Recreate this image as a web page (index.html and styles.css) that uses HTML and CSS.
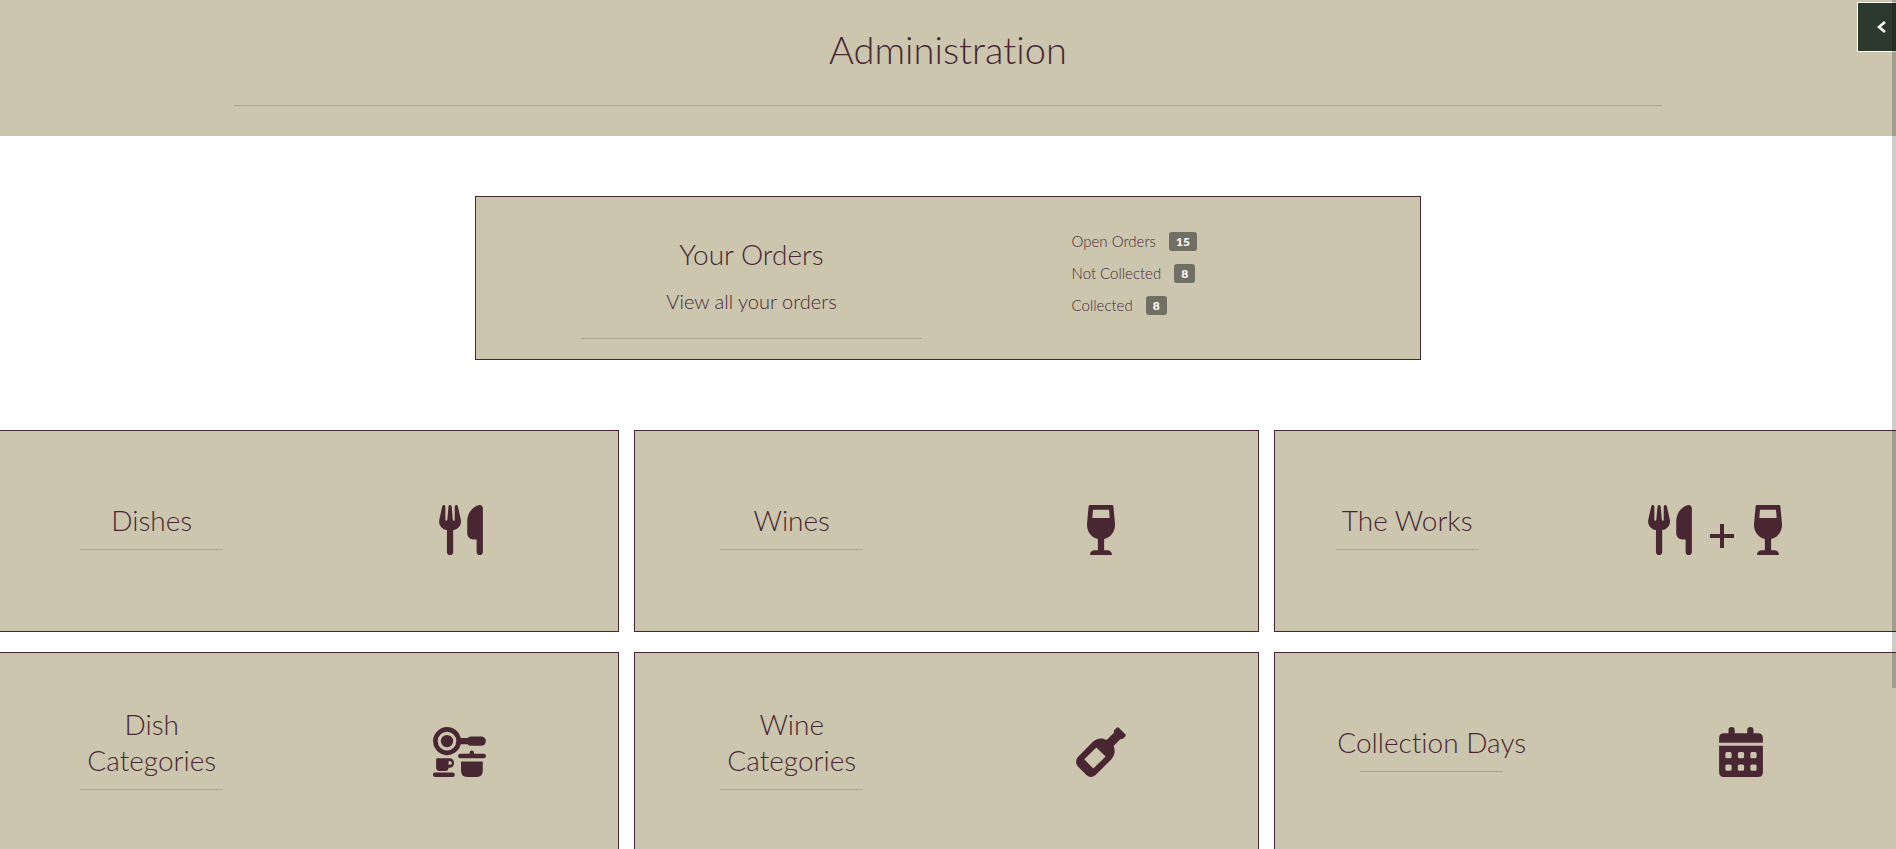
FILE: index.html
```html
<!DOCTYPE html>
<html lang="en">
<head>
<meta charset="utf-8">
<meta name="viewport" content="width=device-width, initial-scale=1">
<title>Administration</title>
<link rel="stylesheet" href="styles.css">
</head>
<body>
<svg class="sprite" aria-hidden="true">
  <symbol id="utensils" viewBox="0 0 448 512"><path d="M416 0C400 0 288 32 288 176V288c0 35.300 28.700 64 64 64h32V480c0 17.700 14.300 32 32 32s32-14.300 32-32V32c0-17.700-14.300-32-32-32zM64 16C64 7.800 57.900 1 49.700 .1S34.200 4.600 32.400 12.500L2.100 148.800C.7 155.100 0 161.500 0 167.900c0 45.900 35.100 83.600 80 87.700V480c0 17.700 14.300 32 32 32s32-14.300 32-32V255.600c44.900-4.100 80-41.800 80-87.700c0-6.400-.7-12.800-2.100-19.100L191.600 12.500c-1.800-8-9.300-13.300-17.400-12.400S160 7.800 160 16V150.200c0 5.400-4.400 9.800-9.800 9.800c-5.100 0-9.300-3.900-9.800-9L127.900 14.600C127.200 6.300 120.300 0 112 0s-15.200 6.300-15.900 14.600L83.700 151c-.5 5.100-4.700 9-9.800 9c-5.400 0-9.800-4.400-9.800-9.800V16z"/></symbol>
  <symbol id="glass" viewBox="0 0 320 512"><path fill-rule="evenodd" d="M48 0H272Q286 0 287 15L303 190C309 268 262 334 192 349V464H224C252 464 272 482 272 505Q272 512 265 512H55Q48 512 48 505C48 482 68 464 96 464H128V349C58 334 11 268 17 190L33 15Q34 0 48 0ZM78 48L71 134H249L242 48Z"/></symbol>
  <symbol id="plus" viewBox="0 0 24 50"><path d="M10 19h4v10h10v4H14v10h-4V33H0v-4h10z"/></symbol>
  <symbol id="kitchen" viewBox="16 0 576 512"><path fill-rule="evenodd" d="M160 0C229 0 287 48 301 112H372C381 102 396 96 410 96H512A48 48 0 0 1 512 192H410C396 192 381 186 372 176H301A144 144 0 1 1 160 0ZM160 48A96 96 0 1 0 160 240A96 96 0 1 0 160 48ZM160 80A64 64 0 1 1 160 208A64 64 0 1 1 160 80ZM392 275V264A22 22 0 0 1 438 264V275H538A22 22 0 0 1 538 320H296A22 22 0 0 1 296 275ZM304 354H528V448Q528 512 464 512H368Q304 512 304 448ZM62 320H192A50 50 0 0 1 192 418H176Q174 451 140 451H84Q48 451 48 415V334Q48 320 62 320ZM176 350V386H192A18 18 0 0 0 192 350ZM38 466H218A23 23 0 0 1 218 512H38A23 23 0 0 1 38 466Z"/></symbol>
  <symbol id="bottle" viewBox="0 0 512 512"><path fill-rule="evenodd" d="M416 8Q427-4 438 7L505 74Q516 85 505 96L480 121Q469 130 458 121L385 194C405 238 397 286 363 330L198 495Q153 529 109 495L17 403Q-17 355 17 310L178 147C216 112 270 108 314 133L391 56Q382 45 391 34ZM208 211L85 331L177 426L303 303Z"/></symbol>
  <symbol id="calendar" viewBox="0 0 448 512"><path fill-rule="evenodd" d="M128 0Q160 0 160 32V64H288V32Q288 0 320 0T352 32V64H400Q448 64 448 112V160H0V112Q0 64 48 64H96V32Q96 0 128 0ZM0 192H448V464Q448 512 400 512H48Q0 512 0 464ZM80 256Q64 256 64 272V304Q64 320 80 320H112Q128 320 128 304V272Q128 256 112 256ZM208 256Q192 256 192 272V304Q192 320 208 320H240Q256 320 256 304V272Q256 256 240 256ZM336 256Q320 256 320 272V304Q320 320 336 320H368Q384 320 384 304V272Q384 256 368 256ZM80 384Q64 384 64 400V432Q64 448 80 448H112Q128 448 128 432V400Q128 384 112 384ZM208 384Q192 384 192 400V432Q192 448 208 448H240Q256 448 256 432V400Q256 384 240 384ZM336 384Q320 384 320 400V432Q320 448 336 448H368Q384 448 384 432V400Q384 384 368 384Z"/></symbol>
</svg>

<header class="page-header">
  <h1>Administration</h1>
  <hr class="rule header-rule">
</header>

<button class="drawer-toggle" type="button" aria-label="Open menu">
  <svg class="chevron" viewBox="0 0 10 14" aria-hidden="true"><path d="M8 2L2 7l6 5"/></svg>
</button>
<div class="scroll-thumb"></div>

<main>
  <section class="orders">
    <a class="orders-link" href="#orders">
      <h2>Your Orders</h2>
      <p>View all your orders</p>
      <hr class="rule orders-rule">
    </a>
    <ul class="counts">
      <li>Open Orders <span class="badge">15</span></li>
      <li>Not Collected <span class="badge">8</span></li>
      <li>Collected <span class="badge">8</span></li>
    </ul>
  </section>

  <nav class="cards" aria-label="Administration sections">
    <a class="card" href="#dishes">
      <div class="card-title"><h2>Dishes</h2><hr class="rule card-rule"></div>
      <div class="icons"><svg class="icon"><use href="#utensils"/></svg></div>
    </a>
    <a class="card" href="#wines">
      <div class="card-title"><h2>Wines</h2><hr class="rule card-rule"></div>
      <div class="icons"><svg class="icon icon-glass"><use href="#glass"/></svg></div>
    </a>
    <a class="card card-works" href="#works">
      <div class="card-title"><h2>The Works</h2><hr class="rule card-rule"></div>
      <div class="icons">
        <svg class="icon"><use href="#utensils"/></svg>
        <svg class="icon icon-plus"><use href="#plus"/></svg>
        <svg class="icon icon-glass"><use href="#glass"/></svg>
      </div>
    </a>
    <a class="card" href="#dish-categories">
      <div class="card-title"><h2>Dish Categories</h2><hr class="rule card-rule"></div>
      <div class="icons"><svg class="icon icon-kitchen"><use href="#kitchen"/></svg></div>
    </a>
    <a class="card" href="#wine-categories">
      <div class="card-title"><h2>Wine Categories</h2><hr class="rule card-rule"></div>
      <div class="icons"><svg class="icon icon-bottle"><use href="#bottle"/></svg></div>
    </a>
    <a class="card" href="#collection-days">
      <div class="card-title card-title-wide"><h2>Collection Days</h2><hr class="rule card-rule"></div>
      <div class="icons"><svg class="icon"><use href="#calendar"/></svg></div>
    </a>
  </nav>
</main>
</body>
</html>
```
FILE: styles.css
```css
:root {
  --sand: #ccc6ae;
  --plum: #482733;
  --line: #a9a28f;
}

* { box-sizing: border-box; }

body {
  margin: 0;
  background: #fff;
  color: var(--plum);
  font-family: "Lato", "Liberation Sans", sans-serif;
  font-weight: 300;
  font-variant-ligatures: none;
  overflow-x: hidden;
}

h1, h2, p, ul { margin: 0; padding: 0; font-weight: 300; }
a { color: inherit; text-decoration: none; }

.sprite { display: none; }

.rule {
  height: 1px;
  margin: 0;
  border: 0;
  background: var(--line);
}

.page-header {
  display: flex;
  flex-direction: column;
  align-items: center;
  padding: 25px 0 30px;
  background: var(--sand);
}
h1 { font-size: 38px; line-height: 48px; }
.header-rule { width: 75.3%; margin-top: 32px; }

.drawer-toggle {
  position: fixed;
  top: 2px;
  right: -11px;
  display: flex;
  align-items: center;
  justify-content: center;
  width: 50px;
  height: 50px;
  padding: 0;
  border: 1px solid #fff;
  background: #2c392d;
}
.chevron {
  width: 10px;
  height: 14px;
  fill: none;
  stroke: #fff;
  stroke-width: 2.6;
}
.scroll-thumb {
  position: fixed;
  top: 0;
  right: 0;
  width: 4px;
  height: 81vh;
  background: rgba(0, 0, 0, .2);
}

.orders {
  display: grid;
  grid-template-columns: 7fr 5fr;
  width: 49.85%;
  margin: 60px auto 70px;
  border: 1px solid var(--plum);
  background: var(--sand);
}
.orders-link {
  display: flex;
  flex-direction: column;
  align-items: center;
  padding: 39px 0 20px;
}
h2 { font-size: 28px; line-height: 36px; }
.orders-link p { margin-top: 14px; font-size: 20px; line-height: 30px; }
.orders-rule { width: 62%; margin-top: 22px; }

.counts {
  display: flex;
  flex-direction: column;
  gap: 12px;
  padding: 34px 0 0 45px;
  list-style: none;
  font-size: 15px;
  line-height: 20px;
}
.counts li { display: flex; align-items: center; gap: 13px; }
.badge {
  padding: 0 7px;
  border-radius: 3px;
  background: #716e64;
  color: #fff;
  font-size: 12px;
  font-weight: 900;
  line-height: 19px;
}

.cards {
  display: grid;
  grid-template-columns: repeat(3, 1fr);
  gap: 20px 15px;
  margin: 0 -3px 20px -6px;
}
.card {
  display: grid;
  grid-template-columns: 1fr 1fr;
  align-items: center;
  min-height: 202px;
  padding: 0 2px;
  border: 1px solid var(--plum);
  background: var(--sand);
}
.card-works { grid-template-columns: 3fr 4fr; padding: 0 6px 0 0; }
.card-title {
  display: flex;
  flex-direction: column;
  align-items: center;
  width: 143px;
  margin: 0 auto;
  text-align: center;
}
.card-title-wide { width: auto; }
.card-rule { width: 143px; margin: 11px 0; }

.icons { display: flex; justify-content: center; gap: 18px; padding-bottom: 2px; }
.icon { width: 44px; height: 50px; fill: var(--plum); }
.icon-glass { width: 32px; }
.icon-plus { width: 24px; }
.icon-kitchen { width: 56px; }
.icon-bottle { width: 50px; }
```
